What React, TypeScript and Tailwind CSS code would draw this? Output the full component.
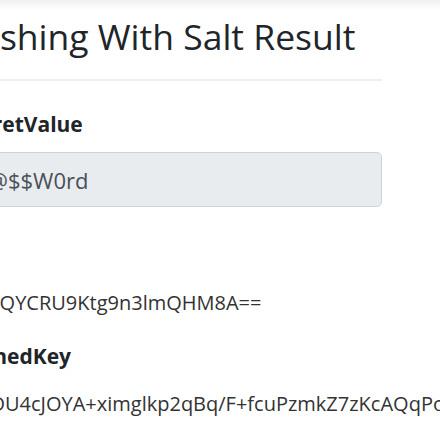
import * as React from "react";

const result = {
    secretValue: "P@$$W0rd",
    salt: "OwGQYCRU9Ktg9n3lmQHM8A==",
    hashedKey: "MWDU4cJOYA+ximglkp2qBq/F+fcuPzmkZ7zKcAQqPoN1sE=",
};

const Field: React.FC<{ label: string; labelClass?: string; children: React.ReactNode }> = ({ label, labelClass, children }) => {

    return (
        <div className="flex flex-col">
            <label className={`text-[21px] leading-[30px] font-bold text-[#212529] ${labelClass ?? ""}`}>
                {label}
            </label>
            {children}
        </div>
    );
};

export default function App() {

    return (
        <div
            className="w-[440px] h-[440px] overflow-hidden bg-white text-[#212529]"
            style={{ fontFamily: "'Open Sans', 'Noto Sans', sans-serif" }}
        >
            <div className="h-[10px] bg-gradient-to-b from-[#f0f0f0] to-white" />
            <div className="ml-[-46px] w-[428px] flex flex-col">
                <h1 className="mt-[2px] text-[35.5px] leading-[48px] font-normal whitespace-nowrap">
                    Hashing With Salt Result
                </h1>
                <div className="mt-[19px] h-[2px] bg-[#efefef]" />
                <div className="mt-[28px]">
                    <Field label="SecretValue" labelClass="ml-[4px]">
                        <input
                            readOnly
                            value={result.secretValue}
                            className="mt-[13px] h-[55px] pl-[20px] pr-4 rounded-[5px] border border-[#ced4da] bg-[#e9ecef] text-[22px] text-[#495057] outline-none"
                        />
                    </Field>
                </div>
                <div className="mt-[31px]">
                    <Field label="Salt">
                        <div className="mt-[20px] text-[20px] leading-[30px] text-[#333] whitespace-nowrap">
                            {result.salt}
                        </div>
                    </Field>
                </div>
                <div className="mt-[23px]">
                    <Field label="HashedKey">
                        <div className="mt-[18px] text-[20px] leading-[30px] text-[#333] whitespace-nowrap">
                            {result.hashedKey}
                        </div>
                    </Field>
                </div>
            </div>
        </div>
    );
}
